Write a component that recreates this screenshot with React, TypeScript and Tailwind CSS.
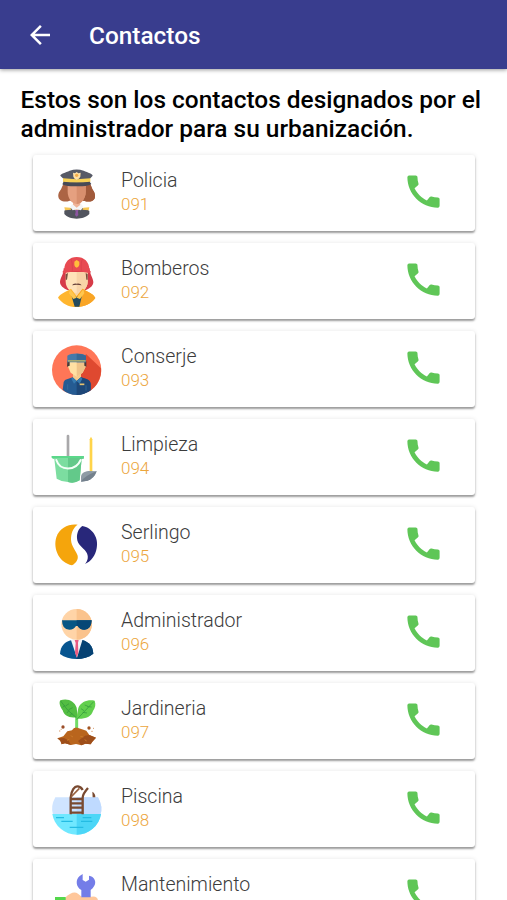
import type { ReactNode } from "react";

function Icon({ children }: { children: ReactNode }) {
  return (
    <svg viewBox="66 56 150 150" className="block size-[50px] shrink-0 overflow-visible">
      {children}
    </svg>
  );
}

function Police() {
  return (
    <Icon>
      <path d="M103 97C96 106 96 114 89 123C82 133 83 149 98 153Q110 155 119 151H162Q173 155 184 153C198 149 197 133 191 123C184 114 185 106 178 97Z" fill="#ac6444" />
      <path d="M140 99H178C185 106 184 114 191 123C197 133 198 149 184 153Q173 155 162 151H140Z" fill="#a15a3b" />
      <path d="M129 151H151V179H129Z" fill="#f0b498" />
      <path d="M113 107H167V124C167 144 154 161 140 161C126 161 113 144 113 124Z" fill="#e5a080" />
      <path d="M140 107H167V124C167 144 154 161 140 161Z" fill="#d88f6e" />
      <path d="M103 181C108 177 118 175 124 173L140 181L155 173C163 175 174 177 178 182V191C170 200 155 205 140 205C125 205 110 200 103 191Z" fill="#51545e" />
      <path d="M120 169L127 161L140 172L154 161L160 169L153 180L140 177L128 180Z" fill="#f4f5f6" />
      <path d="M136 179H145L144 185L145 194L140 199L135 194L137 185Z" fill="#8b55a0" />
      <path d="M103 171L121 172L124 178L105 180ZM178 171L160 172L157 178L176 180Z" fill="#f6c653" />
      <path d="M91 76C91 70 107 67 119 61C133 56 147 56 161 61C174 67 188 70 188 76L179 86V101C168 107 112 107 101 101V86Z" fill="#575a66" />
      <path d="M99 84Q140 89 181 84V95Q140 99 99 95Z" fill="#f7d156" />
      <path d="M101 94Q140 99 179 94L184 101Q176 107 157 108H122Q104 107 97 102Z" fill="#474a55" />
      <path d="M129 67L135 69L140 65L145 69L152 67L151 79Q149 85 140 89Q131 85 130 79Z" fill="#ffe0a4" />
      <circle cx="140" cy="75" r="5" fill="#f5ad48" />
    </Icon>
  );
}

function Firefighter() {
  return (
    <Icon>
      <path d="M101 90C101 110 91 117 90 131C90 142 100 149 112 155H168C181 149 190 142 190 131C189 117 179 110 179 90Z" fill="#d63b48" />
      <path d="M125 146H157V178L140 190L125 178Z" fill="#f9d4a2" />
      <path d="M107 101H173V130C173 150 156 164 140 164C124 164 107 150 107 130Z" fill="#ffe2b9" />
      <path d="M140 101H173V130C173 150 156 164 140 164Z" fill="#f8d3a7" />
      <path d="M107 108L114 104L111 124H107ZM173 108L167 104L169 124H173Z" fill="#79503f" />
      <path d="M103 94C103 70 119 56 140 56C162 56 178 70 178 94L183 101Q180 105 173 103Q140 94 108 103Q100 105 97 101Z" fill="#e84a52" />
      <path d="M122 62Q128 69 127 97M158 62Q152 69 154 97" fill="none" stroke="#d53e49" strokeWidth="2" />
      <path d="M133 70L140 65L148 70V80Q146 86 140 88Q134 86 133 80Z" fill="#ffbd3c" />
      <path d="M126 141Q130 134 140 136Q151 134 155 141L140 139Z" fill="#684139" />
      <path d="M84 178C91 165 106 161 123 151L140 174L158 151C173 161 190 165 196 179C184 195 165 206 140 206C115 206 96 195 84 178Z" fill="#ffb62f" />
      <path d="M140 174L158 151C173 161 190 165 196 179C184 195 165 206 140 206Z" fill="#f9a526" />
      <path d="M124 171L140 176L156 171L148 205H134Z" fill="#244a5c" />
      <path d="M120 153L140 178L130 182L117 165ZM160 153L140 178L150 182L163 165Z" fill="#ffc74f" />
    </Icon>
  );
}

function Concierge() {
  return (
    <Icon>
      <circle cx="140" cy="131" r="74" fill="#ff7657" />
      <path d="M168 83L213 126A74 74 0 0 1 176 196L126 169Z" fill="#df4930" />
      <path d="M129 140H153V169H129Z" fill="#f5cb8b" />
      <path d="M113 105H168V119L158 139L140 151L122 139L113 119Z" fill="#ffe0a3" />
      <path d="M140 105H168V119L158 139L140 151Z" fill="#efc489" />
      <path d="M112 105H119V118L111 121ZM163 105H169V121L163 118Z" fill="#493b39" />
      <path d="M112 88C122 79 158 79 168 88V108H112Z" fill="#467aaa" />
      <path d="M140 82Q158 82 168 88V108H140Z" fill="#386996" />
      <path d="M114 101H167V106H114Z" fill="#a8aa70" />
      <path d="M101 167Q103 160 113 158L128 153L140 164L153 153L169 158Q180 161 182 172V192Q163 206 140 206Q114 205 98 190Z" fill="#255b92" />
      <path d="M140 164L153 153L169 158Q180 161 182 172V192Q163 206 140 206Z" fill="#1d4778" />
      <path d="M128 153L140 164L132 172L124 157ZM153 153L140 164L149 172L157 157Z" fill="#367ab0" />
      <path d="M149 174H163" stroke="#e7c36e" strokeWidth="5" />
      <path d="M113 174V190M168 177V193" stroke="#3b729f" strokeWidth="2" />
    </Icon>
  );
}

function Cleaning() {
  return (
    <Icon>
      <path d="M114 65V124" stroke="#a9a8aa" strokeWidth="8" strokeLinecap="round" />
      <path d="M65 125H161V133H155L149 198Q132 209 114 203Q94 202 80 193L73 134H68Z" fill="#7cdda0" />
      <path d="M114 125H161V133H155L149 198Q132 209 114 203Z" fill="#63c98a" />
      <path d="M65 125H161V131H65Z" fill="#5bd88a" />
      <path d="M79 137C90 171 137 171 152 137" fill="none" stroke="#f3fff7" strokeWidth="6" strokeLinecap="round" />
      <path d="M179 75L183 67L187 75V173H179Z" fill="#ffd44a" />
      <path d="M153 202V187C154 174 167 170 181 170L200 171Q192 193 173 199Z" fill="#8e9ba5" />
      <path d="M153 202Q163 185 200 171Q192 193 173 199Z" fill="#74818d" />
    </Icon>
  );
}

function Serlingo() {
  return (
    <Icon>
      <path d="M143 67C119 63 88 75 79 105C68 141 89 182 126 189C139 181 145 172 143 160C139 146 124 132 123 112C123 94 128 77 143 67Z" fill="#f5a50c" />
      <path d="M157 71C188 76 207 108 200 138C196 160 184 177 165 185C174 174 177 161 168 148C159 136 142 127 141 108C140 92 146 78 157 71Z" fill="#28277a" />
    </Icon>
  );
}

function Manager() {
  return (
    <Icon>
      <path d="M90 191C92 166 103 155 126 149H156C178 155 188 167 190 190C176 201 158 206 140 206C121 206 103 201 90 191Z" fill="#075590" />
      <path d="M140 149H156C178 155 188 167 190 190C176 201 158 206 140 206Z" fill="#064273" />
      <path d="M123 150L131 142H149L157 150L141 202Z" fill="#f2f5f8" />
      <path d="M134 149H146L144 158L145 187L140 202L135 187L137 158Z" fill="#eb5c82" />
      <circle cx="140" cy="102" r="46" fill="#ffd4a7" />
      <path d="M140 56A46 46 0 0 1 140 148Z" fill="#fac38d" />
      <path d="M96 90H185Q184 118 163 118Q149 118 143 107H138Q132 118 118 118Q96 118 96 90Z" fill="#075685" />
      <path d="M140 90H185Q184 118 163 118Q149 118 143 107H140Z" fill="#064776" />
    </Icon>
  );
}

function Garden() {
  return (
    <Icon>
      <path d="M140 112V158" stroke="#72dc67" strokeWidth="9" />
      <path d="M91 66C112 58 134 68 140 88L143 116C120 122 102 112 98 96C90 86 86 73 91 66Z" fill="#53bd42" />
      <path d="M194 67C175 63 153 69 145 89L139 121C164 123 184 116 189 98C196 88 198 78 194 67Z" fill="#62cf4d" />
      <path d="M92 68Q109 96 140 119M107 83L117 76M116 94L128 88M105 81L98 87M117 96L111 104M126 105L120 112M191 70L140 124M174 84L164 80M162 97L153 91M172 85L185 86M158 102L171 104" fill="none" stroke="#2f963b" strokeWidth="2" />
      <path d="M82 180L100 174L112 159L126 156Q132 145 142 148L156 153L169 157L178 170L198 178L187 190L182 198L166 196L154 201L138 197L123 200L105 195L95 198L91 187Z" fill="#b9651d" />
      <path d="M82 180L102 179L115 186L123 200L105 195L95 198L91 187ZM165 172L178 170L198 178L187 190L182 198L166 196L154 201L144 188Z" fill="#9e4e1a" />
      <path d="M122 172L129 176M151 174L160 176M111 186L118 183M164 184L170 188" stroke="#c97928" strokeWidth="3" />
      <circle cx="99" cy="146" r="5" fill="#9b4d28" /><circle cx="177" cy="149" r="5" fill="#a45421" />
      <path d="M87 158H91M92 153H95M184 159H188M189 150H192" stroke="#d89b69" strokeWidth="3" />
    </Icon>
  );
}

function Pool() {
  return (
    <Icon>
      <path d="M76 93H204Q220 123 211 145H69Q61 120 76 93Z" fill="#cfe4ff" />
      <path d="M140 93H204Q220 123 211 145H140Z" fill="#bfdaff" />
      <path d="M67 143H213A74 74 0 0 1 67 143Z" fill="#70e8ff" />
      <path d="M140 143H213A74 74 0 0 1 140 205Z" fill="#4cd6f7" />
      <path d="M122 144V94C124 72 133 59 144 60Q153 61 158 71M158 144V94Q158 83 174 65M122 98H158M122 111H158M122 124H158M122 139H158" fill="none" stroke="#794a31" strokeWidth="7" />
      <path d="M123 92L148 66" stroke="#98613f" strokeWidth="5" />
      <path d="M187 76Q197 82 196 93H188Z" fill="#794a31" />
      <path d="M94 165H128M153 165H187M119 183H160M78 154H102M158 154H184" stroke="#24bce3" strokeWidth="4" />
    </Icon>
  );
}

function Maintenance() {
  return (
    <Icon>
      <g transform="translate(0 -12)">
        <path d="M105 143Q110 135 121 130Q134 123 144 130L155 139H184Q203 136 204 151V175H104Z" fill="#ffc79b" />
        <path d="M75 140H107V180H75Z" fill="#54d74b" />
        <path d="M154 141V119C137 110 136 87 149 77L158 71V89L167 94L177 88V76C193 78 201 95 192 108Q189 114 182 119V141Z" fill="#747de8" />
      </g>
    </Icon>
  );
}

const contacts = [
  { name: "Policia", number: "091", icon: <Police /> },
  { name: "Bomberos", number: "092", icon: <Firefighter /> },
  { name: "Conserje", number: "093", icon: <Concierge /> },
  { name: "Limpieza", number: "094", icon: <Cleaning /> },
  { name: "Serlingo", number: "095", icon: <Serlingo /> },
  { name: "Administrador", number: "096", icon: <Manager /> },
  { name: "Jardineria", number: "097", icon: <Garden /> },
  { name: "Piscina", number: "098", icon: <Pool /> },
  { name: "Mantenimiento", number: "", icon: <Maintenance /> },
];

export default function App() {
  return (
    <div className="flex h-[900px] w-full flex-col overflow-hidden bg-white font-['Roboto',sans-serif]">
      <header className="flex h-[69px] shrink-0 items-center bg-[#393d8e] pl-[25px] text-white shadow-[0_1px_4px_rgba(0,0,0,0.4)]">
        <button aria-label="Volver" className="mt-px">
          <svg viewBox="0 0 24 24" className="block size-[30px]" fill="currentColor">
            <path d="M20 11H7.83l5.59-5.59L12 4l-8 8 8 8 1.41-1.41L7.83 13H20z" />
          </svg>
        </button>
        <h1 className="ml-[34px] mt-[2px] text-[24.4px] font-medium leading-[30px]">Contactos</h1>
      </header>
      <main className="shrink-0">
        <p className="mt-4 ml-[20.5px] whitespace-nowrap text-[24.45px] font-medium leading-[29px] text-black">
          Estos son los contactos designados por el<br />administrador para su urbanización.
        </p>
        <ul className="mt-3 flex flex-col gap-3 pr-8 pl-[33px]">
          {contacts.map(({ name, number, icon }) => (
            <li key={name} className="flex h-[76px] items-start rounded-[3px] bg-white pt-[13.7px] pr-[30.5px] pl-[19px] shadow-[0_2px_2px_rgba(0,0,0,0.36),0_0_4px_rgba(0,0,0,0.1)]">
              {icon}
              <div className="ml-[19px] flex-1">
                <div className="text-[19.55px] font-light leading-[24px] text-[#3c3c3c]">{name}</div>
                {number && <div className="text-[17px] font-light leading-[23px] text-[#eca63d]">{number}</div>}
              </div>
              <svg viewBox="0 0 24 24" className="mt-px block size-[43px] shrink-0" fill="#5fc657">
                <path d="M20.01 15.38c-1.23 0-2.42-.2-3.53-.56a.977.977 0 0 0-1.01.24l-1.57 1.97c-2.83-1.35-5.48-3.9-6.89-6.83l1.95-1.66c.27-.28.35-.67.24-1.02C8.83 6.41 8.64 5.22 8.64 4c0-.54-.45-.99-.99-.99H4.19C3.65 3.01 3 3.25 3 4c0 9.27 7.73 17 17 17 .71 0 .99-.63.99-1.18v-3.45c0-.54-.44-.99-.98-.99z" />
              </svg>
            </li>
          ))}
        </ul>
      </main>
    </div>
  );
}
